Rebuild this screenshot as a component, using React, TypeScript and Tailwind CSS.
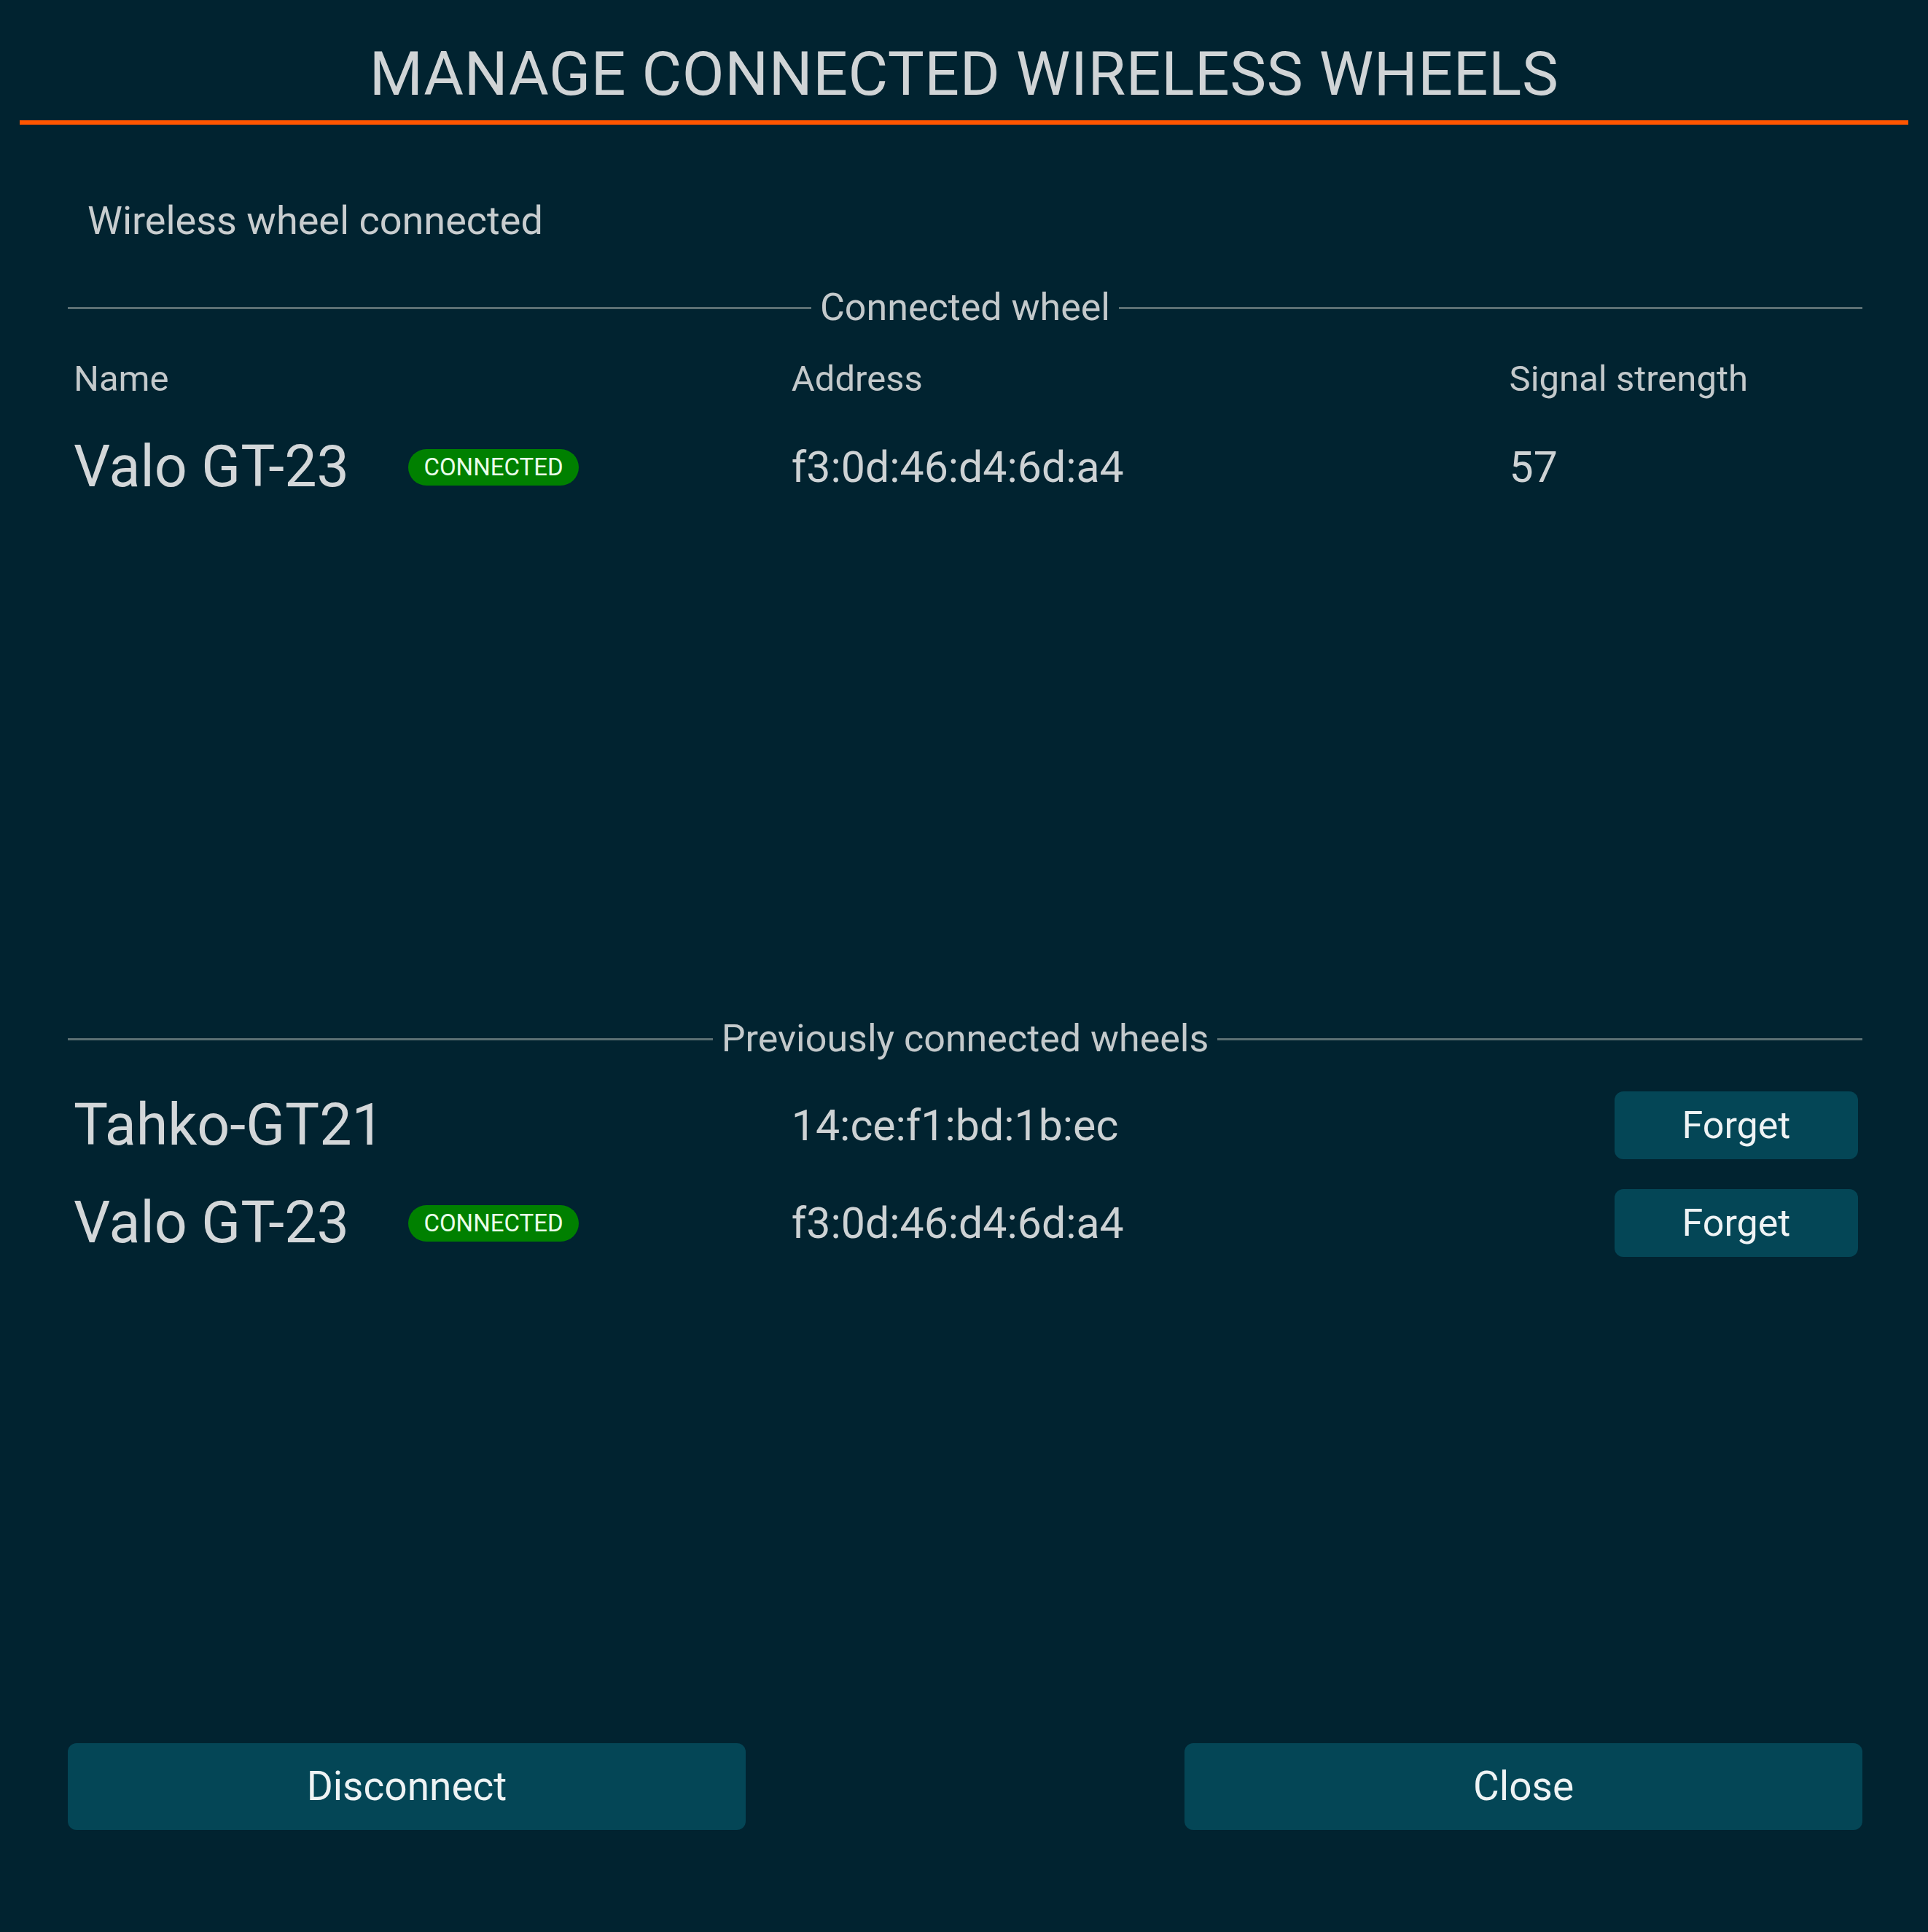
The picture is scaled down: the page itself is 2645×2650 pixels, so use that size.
import React from "react";

const Badge = () => (
  <span className="inline-flex items-center justify-center h-[50px] w-[234px] rounded-full bg-[#008000] text-[33px] leading-none text-[#eaffea]">
    CONNECTED
  </span>
);

const Divider = ({ label }: { label: string }) => (
  <div className="flex items-center gap-[12px]">
    <div className="flex-1 h-[3px] bg-[#5b6f73]" />
    <span className="text-[52px] leading-none text-[#c3c9cb]">{label}</span>
    <div className="flex-1 h-[3px] bg-[#5b6f73]" />
  </div>
);

const ForgetButton = () => (
  <button className="h-[93px] w-[334px] rounded-[12px] bg-[#044656] text-[52px] leading-none text-[#eef3f4]">
    Forget
  </button>
);

export default function App() {
  return (
    <div
      className="w-[2645px] h-[2650px] bg-[#012330] flex flex-col text-[#cdd2d4]"
      style={{ fontFamily: "Roboto, 'Liberation Sans', sans-serif" }}
    >
      <div className="pt-[60px] text-center text-[84px] leading-none tracking-[0.6px] text-[#d0d4d6]">
        MANAGE CONNECTED WIRELESS WHEELS
      </div>
      <div className="mx-[27px] mt-[21px] h-[6px] bg-[#ff5500]" />

      <div className="pl-[93px] pr-[90px] flex flex-col">
        <div className="mt-[105px] pl-[27px] text-[54px] leading-none text-[#c8cdcf]">
          Wireless wheel connected
        </div>

        <div className="mt-[66px]">
          <Divider label="Connected wheel" />
        </div>

        <div className="mt-[47px] grid grid-cols-[2fr_2fr_1fr] text-[49px] leading-none text-[#c3c9cb]">
          <div className="pl-[8px]">Name</div>
          <div className="pl-[8px]">Address</div>
          <div className="pl-[8px]">Signal strength</div>
        </div>

        <div className="mt-[57px] grid grid-cols-[2fr_2fr_1fr] items-center">
          <div className="pl-[8px] flex items-center gap-[81px]">
            <span className="text-[79px] leading-none text-[#d3d7d9]">Valo GT-23</span>
            <Badge />
          </div>
          <div className="pl-[8px] text-[59px] leading-none">f3:0d:46:d4:6d:a4</div>
          <div className="pl-[8px] text-[59px] leading-none">57</div>
        </div>

        <div className="mt-[719px]">
          <Divider label="Previously connected wheels" />
        </div>

        <div className="mt-[46px] flex flex-col gap-[41px]">
          <div className="grid grid-cols-[2fr_2fr_1fr] items-center h-[93px]">
            <div className="pl-[8px] text-[79px] leading-none text-[#d3d7d9]">Tahko-GT21</div>
            <div className="pl-[8px] text-[59px] leading-none">14:ce:f1:bd:1b:ec</div>
            <div className="flex justify-end pr-[6px]">
              <ForgetButton />
            </div>
          </div>
          <div className="grid grid-cols-[2fr_2fr_1fr] items-center h-[93px]">
            <div className="pl-[8px] flex items-center gap-[81px]">
              <span className="text-[79px] leading-none text-[#d3d7d9]">Valo GT-23</span>
              <Badge />
            </div>
            <div className="pl-[8px] text-[59px] leading-none">f3:0d:46:d4:6d:a4</div>
            <div className="flex justify-end pr-[6px]">
              <ForgetButton />
            </div>
          </div>
        </div>

        <div className="mt-[667px] flex justify-between">
          <button className="h-[119px] w-[930px] rounded-[12px] bg-[#044656] text-[55px] leading-none text-[#eef3f4]">
            Disconnect
          </button>
          <button className="h-[119px] w-[930px] rounded-[12px] bg-[#044656] text-[55px] leading-none text-[#eef3f4]">
            Close
          </button>
        </div>
      </div>
    </div>
  );
}
